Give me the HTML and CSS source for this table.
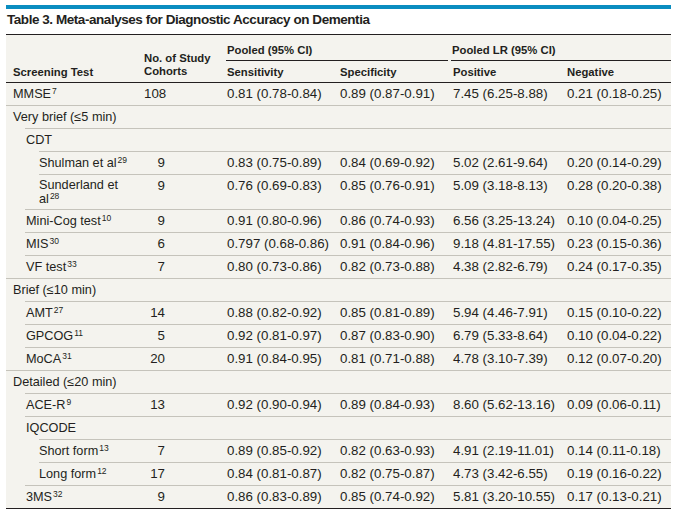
FILE: index.html
```html
<!DOCTYPE html>
<html lang="en">
<head>
<meta charset="utf-8">
<title>Table 3</title>
<link rel="stylesheet" href="styles.css">
</head>
<body>
<div class="tbl">
  <div class="bar"></div>
  <h1 class="title">Table 3. Meta-analyses for Diagnostic Accuracy on Dementia</h1>
  <div class="body">
    <div class="head">
      <div class="h-test">Screening Test</div>
      <div class="h-cohorts">No. of Study<br>Cohorts</div>
      <div class="h-group g1"><span>Pooled (95% CI)</span></div>
      <div class="h-group g2"><span>Pooled LR (95% CI)</span></div>
      <div class="h-sub">Sensitivity</div>
      <div class="h-sub">Specificity</div>
      <div class="h-sub">Positive</div>
      <div class="h-sub">Negative</div>
    </div>

    <div class="row l0 first"><div class="c1">MMSE<sup>7</sup></div><div class="c2"><span class="n">108</span></div><div class="c">0.81 (0.78-0.84)</div><div class="c">0.89 (0.87-0.91)</div><div class="c">7.45 (6.25-8.88)</div><div class="c">0.21 (0.18-0.25)</div></div>
    <div class="row l0"><div class="c1">Very brief (≤5 min)</div></div>
    <div class="row l1"><div class="c1">CDT</div></div>
    <div class="row l2"><div class="c1">Shulman et al<sup>29</sup></div><div class="c2"><span class="n">9</span></div><div class="c">0.83 (0.75-0.89)</div><div class="c">0.84 (0.69-0.92)</div><div class="c">5.02 (2.61-9.64)</div><div class="c">0.20 (0.14-0.29)</div></div>
    <div class="row l2"><div class="c1 wrap">Sunderland et<br>al<sup>28</sup></div><div class="c2"><span class="n">9</span></div><div class="c">0.76 (0.69-0.83)</div><div class="c">0.85 (0.76-0.91)</div><div class="c">5.09 (3.18-8.13)</div><div class="c">0.28 (0.20-0.38)</div></div>
    <div class="row l1"><div class="c1">Mini-Cog test<sup>10</sup></div><div class="c2"><span class="n">9</span></div><div class="c">0.91 (0.80-0.96)</div><div class="c">0.86 (0.74-0.93)</div><div class="c">6.56 (3.25-13.24)</div><div class="c">0.10 (0.04-0.25)</div></div>
    <div class="row l1"><div class="c1">MIS<sup>30</sup></div><div class="c2"><span class="n">6</span></div><div class="c">0.797 (0.68-0.86)</div><div class="c">0.91 (0.84-0.96)</div><div class="c">9.18 (4.81-17.55)</div><div class="c">0.23 (0.15-0.36)</div></div>
    <div class="row l1"><div class="c1">VF test<sup>33</sup></div><div class="c2"><span class="n">7</span></div><div class="c">0.80 (0.73-0.86)</div><div class="c">0.82 (0.73-0.88)</div><div class="c">4.38 (2.82-6.79)</div><div class="c">0.24 (0.17-0.35)</div></div>
    <div class="row l0"><div class="c1">Brief (≤10 min)</div></div>
    <div class="row l1"><div class="c1">AMT<sup>27</sup></div><div class="c2"><span class="n">14</span></div><div class="c">0.88 (0.82-0.92)</div><div class="c">0.85 (0.81-0.89)</div><div class="c">5.94 (4.46-7.91)</div><div class="c">0.15 (0.10-0.22)</div></div>
    <div class="row l1"><div class="c1">GPCOG<sup>11</sup></div><div class="c2"><span class="n">5</span></div><div class="c">0.92 (0.81-0.97)</div><div class="c">0.87 (0.83-0.90)</div><div class="c">6.79 (5.33-8.64)</div><div class="c">0.10 (0.04-0.22)</div></div>
    <div class="row l1"><div class="c1">MoCA<sup>31</sup></div><div class="c2"><span class="n">20</span></div><div class="c">0.91 (0.84-0.95)</div><div class="c">0.81 (0.71-0.88)</div><div class="c">4.78 (3.10-7.39)</div><div class="c">0.12 (0.07-0.20)</div></div>
    <div class="row l0"><div class="c1">Detailed (≤20 min)</div></div>
    <div class="row l1"><div class="c1">ACE-R<sup>9</sup></div><div class="c2"><span class="n">13</span></div><div class="c">0.92 (0.90-0.94)</div><div class="c">0.89 (0.84-0.93)</div><div class="c">8.60 (5.62-13.16)</div><div class="c">0.09 (0.06-0.11)</div></div>
    <div class="row l1"><div class="c1">IQCODE</div></div>
    <div class="row l2"><div class="c1">Short form<sup>13</sup></div><div class="c2"><span class="n">7</span></div><div class="c">0.89 (0.85-0.92)</div><div class="c">0.82 (0.63-0.93)</div><div class="c">4.91 (2.19-11.01)</div><div class="c">0.14 (0.11-0.18)</div></div>
    <div class="row l2"><div class="c1">Long form<sup>12</sup></div><div class="c2"><span class="n">17</span></div><div class="c">0.84 (0.81-0.87)</div><div class="c">0.82 (0.75-0.87)</div><div class="c">4.73 (3.42-6.55)</div><div class="c">0.19 (0.16-0.22)</div></div>
    <div class="row l1"><div class="c1">3MS<sup>32</sup></div><div class="c2"><span class="n">9</span></div><div class="c">0.86 (0.83-0.89)</div><div class="c">0.85 (0.74-0.92)</div><div class="c">5.81 (3.20-10.55)</div><div class="c">0.17 (0.13-0.21)</div></div>
  </div>
</div>
</body>
</html>
```

FILE: styles.css
```css
html, body {
  margin: 0;
  padding: 0;
  background: #ffffff;
}
body {
  padding: 5px 9px 0 6px;
  font-family: "Liberation Sans", Arial, sans-serif;
  color: #231f20;
}
.tbl {
  width: 665px;
}
.bar {
  height: 4px;
  background: #0a8dc0;
}
.title {
  margin: 0;
  font-size: 13.5px;
  letter-spacing: -0.45px;
  font-weight: bold;
  line-height: 18px;
  padding: 2px 0 5px 1px;
  height: 18px;
  border-bottom: 1px solid #231f20;
}
.body {
  background: #f4f3ee;
  border-bottom: 1px solid #231f20;
  font-size: 13.3px;
  line-height: 12px;
}
.head {
  display: grid;
  grid-template-columns: 137px 83px 113px 113px 114px 105px;
  grid-template-rows: 26px 21px;
  border-bottom: 1px solid #231f20;
  font-size: 11.3px;
  font-weight: bold;
}
.h-test {
  grid-row: 1 / 3;
  grid-column: 1;
  align-self: end;
  padding: 0 0 4px 7px;
}
.h-cohorts {
  grid-row: 1 / 3;
  grid-column: 2;
  align-self: end;
  line-height: 13px;
  padding: 0 0 4px 1px;
}
.h-group {
  grid-row: 1;
  display: flex;
}
.h-group span {
  flex: 1;
  padding: 9px 0 4px 1px;
  border-bottom: 1px solid #231f20;
}
.g1 {
  grid-column: 3 / 5;
  padding-right: 4px;
}
.g2 {
  grid-column: 5 / 7;
  margin-left: -1px;
}
.h-sub {
  grid-row: 2;
  padding: 5px 0 4px 1px;
}
.row {
  display: grid;
  grid-template-columns: calc(137px - var(--i)) 83px 113px 113px 114px 105px;
  margin-left: var(--i);
  border-top: 1px solid #c5c3bb;
}
.row.first {
  border-top: none;
}
.l0 { --i: 0px; }
.l1 { --i: 19px; }
.l2 { --i: 33px; }
.row > div {
  padding: 5px 0 5px 1px;
  white-space: nowrap;
}
.row > .c1 {
  font-size: 12.7px;
}
.row.l0 > .c1 {
  padding-left: 7px;
}
.row.l2 > .c1 {
  padding-left: 0;
}
.row > .c1.wrap {
  line-height: 14px;
  padding-top: 3px;
  padding-bottom: 3px;
}
.n {
  display: block;
  width: 21px;
  text-align: right;
}
sup {
  font-size: 8.5px;
  line-height: 0;
  vertical-align: 4px;
  margin-left: 1px;
}
```
